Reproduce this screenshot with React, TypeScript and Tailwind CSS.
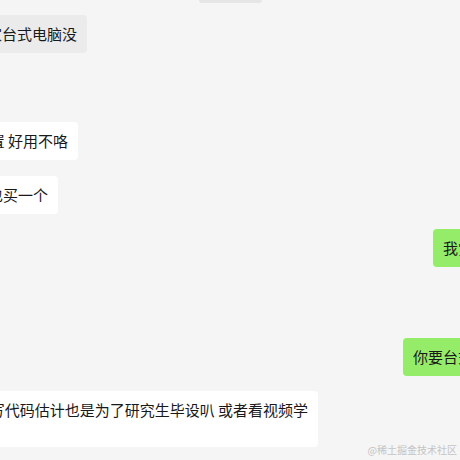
const FONT = { fontFamily: '"Noto Sans CJK SC", "Noto Sans", sans-serif' };

function LeftBubble({
  text,
  right,
  tone = "white",
  tall = false,
  mt,
}: {
  text: string;
  right: string;
  tone?: "white" | "gray";
  tall?: boolean;
  mt: string;
}) {
  return (
    <div className={`flex justify-end shrink-0 ${right} ${mt}`}>
      <div
        className={`shrink-0 whitespace-nowrap rounded-[4px] pl-3 pr-[10px] pt-[9px] text-[15px] leading-[20px] text-[#191919] ${
          tall ? "pb-[27px]" : "pb-[9px]"
        } ${tone === "gray" ? "bg-[#ebebeb]" : "bg-white"}`}
      >
        {text}
      </div>
    </div>
  );
}

function RightBubble({ text, left, mt }: { text: string; left: string; mt: string }) {
  return (
    <div className={`flex justify-start ${left} ${mt}`}>
      <div className="shrink-0 whitespace-nowrap rounded-[4px] bg-[#95ec69] pl-[10px] pr-3 py-[9px] text-[15px] leading-[20px] text-[#191919]">
        {text}
      </div>
    </div>
  );
}

export default function App() {
  return (
    <div
      className="relative flex h-[460px] w-[460px] flex-col overflow-hidden bg-[#f5f5f5]"
      style={FONT}
    >
      <div className="ml-[199px] h-[3px] w-[63px] shrink-0 rounded-b-[3px] bg-[#e6e6e6]" />

      <LeftBubble text="你家台式电脑没" right="w-[87px]" tone="gray" mt="mt-[12px]" />
      <LeftBubble text="配置 好用不咯" right="w-[78px]" mt="mt-[69px]" />
      <LeftBubble text="我也买一个" right="w-[58px]" mt="mt-[16px]" />

      <RightBubble text="我觉得还行" left="ml-[433px]" mt="mt-[15px]" />
      <RightBubble text="你要台式的吗" left="ml-[403px]" mt="mt-[71px]" />

      <LeftBubble
        text="你写代码估计也是为了研究生毕设叭 或者看视频学"
        right="w-[318px]"
        tall
        mt="mt-[15px]"
      />

      <div className="absolute bottom-[4px] right-[3px] text-[10px] leading-[12px] text-[#c4c4c4]">
        @稀土掘金技术社区
      </div>
    </div>
  );
}
